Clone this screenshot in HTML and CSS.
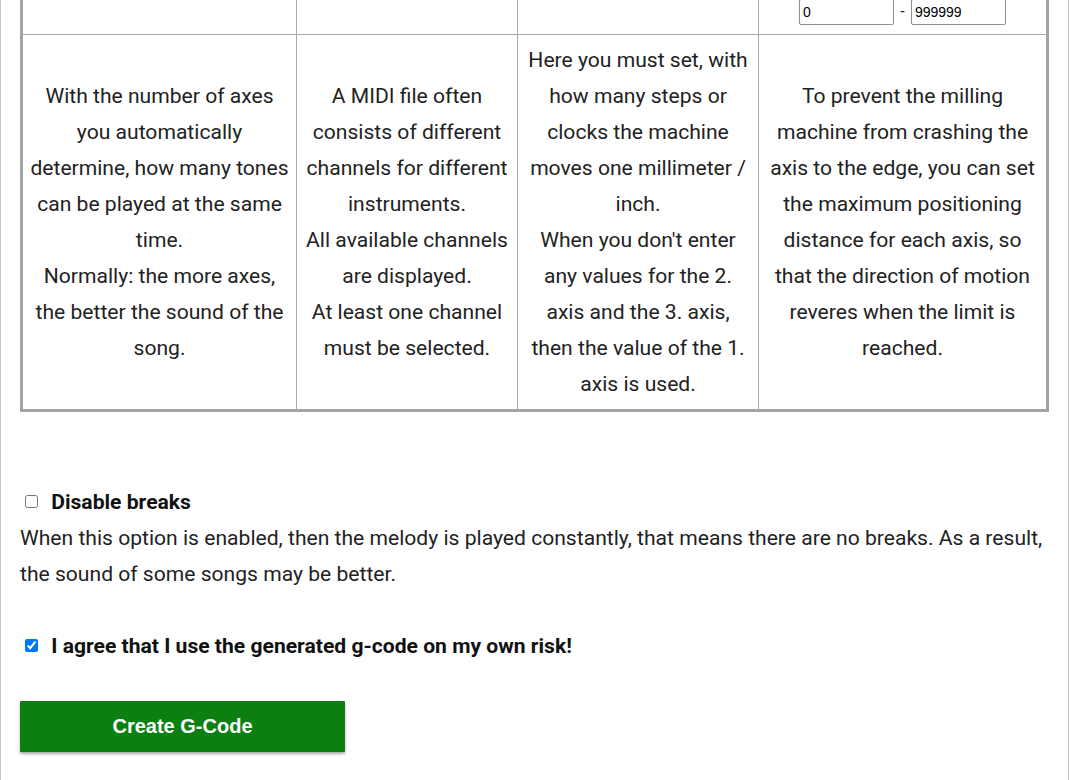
FILE: index.html
```html
<!DOCTYPE html>
<html lang="en">
<head>
<meta charset="utf-8">
<title>MIDI to G-Code</title>
<link rel="stylesheet" href="styles.css">
</head>
<body>
<div class="page">
  <table class="settings">
    <colgroup>
      <col class="c1"><col class="c2"><col class="c3"><col class="c4">
    </colgroup>
    <tr class="inputs-row">
      <td></td>
      <td></td>
      <td></td>
      <td><input class="num" type="text" value="0"> <span class="dash">-</span> <input class="num" type="text" value="999999"></td>
    </tr>
    <tr class="desc-row">
      <td>With the number of axes you automatically determine, how many tones can be played at the same time.<br>Normally: the more axes, the better the sound of the song.</td>
      <td>A MIDI file often consists of different channels for different instruments.<br>All available channels are displayed.<br>At least one channel must be selected.</td>
      <td class="steps">Here you must set, with how many steps or clocks the machine moves one millimeter / inch.<br>When you don't enter any values for the 2. axis and the 3. axis, then the value of the 1. axis is used.</td>
      <td>To prevent the milling machine from crashing the axis to the edge, you can set the maximum positioning distance for each axis, so that the direction of motion reveres when the limit is reached.</td>
    </tr>
  </table>

  <label class="opt first"><input type="checkbox"> Disable breaks</label>
  <p class="note">When this option is enabled, then the melody is played constantly, that means there are no breaks. As a result, the sound of some songs may be better.</p>

  <label class="opt agree"><input type="checkbox" checked> I agree that I use the generated g-code on my own risk!</label>

  <button class="create" type="button">Create G-Code</button>
</div>
</body>
</html>
```

FILE: styles.css
```css
html, body {
  margin: 0;
  padding: 0;
  background: #fff;
}

body {
  font-family: Roboto, "Noto Sans", Arial, sans-serif;
  font-size: 21.1px;
  line-height: 36px;
  color: #222;
}

.page {
  width: 1029px;
  min-height: 780px;
  padding: 0 19px;
  border-left: 1px solid #c4c4c4;
  border-right: 1px solid #c4c4c4;
  overflow: hidden;
}

.settings {
  width: 1029px;
  margin-top: -22px;
  border-collapse: collapse;
  table-layout: fixed;
  border: 3px solid #a3a3a3;
}

.settings .c1 { width: 275px; }
.settings .c2 { width: 221px; }
.settings .c3 { width: 241px; }
.settings .c4 { width: 289px; }

.settings td {
  border: 1px solid #a9a9a9;
  text-align: center;
  vertical-align: middle;
  padding: 7px 5px 7px;
}

.settings td.steps {
  padding-left: 7px;
  padding-right: 7px;
}

.inputs-row td {
  height: 44px;
  padding: 0 4px 9px;
  vertical-align: bottom;
  line-height: 26px;
}

.num {
  box-sizing: border-box;
  width: 95px;
  height: 26px;
  padding: 1px 3px;
  border: 1px solid #8f8f8f;
  border-radius: 2px;
  font-family: "Liberation Sans", Arial, sans-serif;
  font-size: 14px;
  color: #000;
  vertical-align: bottom;
}

.dash {
  font-size: 16px;
  padding: 0 1px;
}

.opt {
  display: block;
  font-weight: 700;
  color: #111;
}

.opt input {
  width: 13px;
  height: 13px;
  margin: 0 8px 0 5px;
  vertical-align: 1px;
}

.opt.first {
  margin-top: 72px;
}

.note {
  margin: 0;
}

.opt.agree {
  margin-top: 36px;
}

.create {
  display: block;
  margin-top: 37px;
  width: 325px;
  height: 51px;
  border: none;
  border-radius: 1px;
  background: #0b8011;
  color: #fff;
  font-family: "Liberation Sans", Arial, sans-serif;
  font-weight: 700;
  font-size: 20px;
  box-shadow: 0 2px 3px rgba(0, 0, 0, 0.35);
  cursor: pointer;
}
```
